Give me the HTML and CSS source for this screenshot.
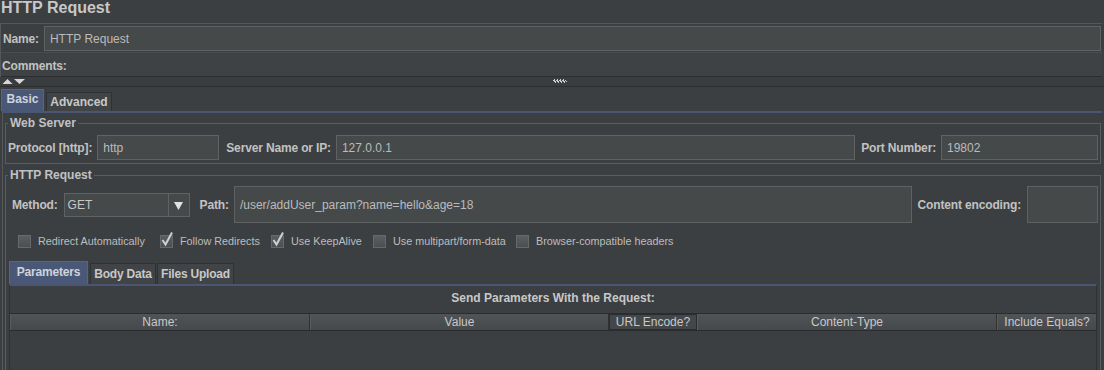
FILE: index.html
```html
<!DOCTYPE html>
<html lang="en">

<head>
    <meta charset="UTF-8">
    <meta name="viewport" content="width=device-width, initial-scale=1.0">
    <title>HTTP Request</title>
    <link rel="stylesheet" href="styles.css">
</head>

<body>
    <div class="title">HTTP Request</div>

    <div class="name-panel">
        <div class="row name-row">
            <span class="label">Name:</span>
            <div class="field grow">HTTP Request</div>
        </div>
        <div class="row comments-row">
            <span class="label">Comments:</span>
        </div>
    </div>

    <div class="splitter">
        <svg class="arrows" width="24" height="7" viewBox="0 0 24 7">
            <polygon points="0.5,6 5.5,1 10.5,6" />
            <polygon points="12,1 23,1 17.5,6" />
        </svg>
        <svg class="grip" width="14" height="5" viewBox="0 0 14 5">
            <rect x="1" y="0" width="1" height="1" /><rect x="4" y="0" width="1" height="1" /><rect x="7" y="0" width="1" height="1" /><rect x="10" y="0" width="1" height="1" />
            <rect x="0" y="1" width="2" height="1" /><rect x="3" y="1" width="2" height="1" /><rect x="6" y="1" width="2" height="1" /><rect x="9" y="1" width="2" height="1" /><rect x="12" y="1" width="1" height="1" />
            <rect x="1" y="2" width="2" height="1" /><rect x="4" y="2" width="2" height="1" /><rect x="7" y="2" width="2" height="1" /><rect x="10" y="2" width="2" height="1" /><rect x="13" y="2" width="1" height="1" />
            <rect x="2" y="3" width="1" height="1" /><rect x="5" y="3" width="1" height="1" /><rect x="8" y="3" width="1" height="1" /><rect x="11" y="3" width="1" height="1" />
        </svg>
    </div>

    <div class="tab-row">
        <div class="tab active tab-basic">Basic</div>
        <div class="tab tab-advanced">Advanced</div>
    </div>

    <div class="tab-body">
        <fieldset class="group web-server">
            <legend>Web Server</legend>
            <div class="row">
                <span class="label">Protocol [http]:</span>
                <div class="field protocol">http</div>
                <span class="label server-label">Server Name or IP:</span>
                <div class="field grow">127.0.0.1</div>
                <span class="label">Port Number:</span>
                <div class="field port">19802</div>
            </div>
        </fieldset>

        <fieldset class="group http-request">
            <legend>HTTP Request</legend>
            <div class="row method-row">
                <span class="label">Method:</span>
                <div class="combo">
                    <span class="combo-text">GET</span>
                    <span class="combo-button">
                        <svg width="9" height="8" viewBox="0 0 9 8"><polygon points="0,0 9,0 4.5,8" /></svg>
                    </span>
                </div>
                <span class="label path-label">Path:</span>
                <div class="field tall grow">/user/addUser_param?name=hello&amp;age=18</div>
                <span class="label">Content encoding:</span>
                <div class="field tall encoding"></div>
            </div>

            <div class="row check-row">
                <span class="cb"></span><span class="cb-label w-redirect">Redirect Automatically</span>
                <span class="cb checked"><svg width="14" height="16" viewBox="0 0 14 16"><path d="M2.5 9 L5.5 13.5 L12 1.5" /></svg></span><span class="cb-label w-follow">Follow Redirects</span>
                <span class="cb checked"><svg width="14" height="16" viewBox="0 0 14 16"><path d="M2.5 9 L5.5 13.5 L12 1.5" /></svg></span><span class="cb-label w-keep">Use KeepAlive</span>
                <span class="cb"></span><span class="cb-label w-multi">Use multipart/form-data</span>
                <span class="cb"></span><span class="cb-label">Browser-compatible headers</span>
            </div>

            <div class="param-tabs">
                <div class="ptab active">Parameters</div>
                <div class="ptab body-data">Body Data</div>
                <div class="ptab files">Files Upload</div>
            </div>
            <div class="param-body">
                <div class="param-title">Send Parameters With the Request:</div>
                <div class="table">
                    <div class="thead">
                        <div class="th">Name:</div>
                        <div class="th">Value</div>
                        <div class="th url">URL Encode?</div>
                        <div class="th">Content-Type</div>
                        <div class="th">Include Equals?</div>
                    </div>
                    <div class="tbody"></div>
                </div>
            </div>
        </fieldset>
    </div>
</body>

</html>
```

FILE: styles.css
```css
* {
    box-sizing: border-box;
}

body {
    margin: 0;
    width: 1104px;
    height: 370px;
    overflow: hidden;
    background-color: #3c3f41;
    color: #bbbbbb;
    font-family: "Liberation Sans", Arial, sans-serif;
    font-size: 12px;
}

.title {
    height: 23px;
    padding-left: 1px;
    font-size: 16px;
    font-weight: bold;
    line-height: 15px;
    color: #c8c8c8;
}

.row {
    display: flex;
    align-items: center;
}

.grow {
    flex-grow: 1;
}

.label {
    font-weight: bold;
    white-space: nowrap;
    color: #c2c2c2;
    margin-right: 6px;
    letter-spacing: -0.15px;
}

.field {
    height: 25px;
    display: flex;
    align-items: center;
    padding-left: 5px;
    background-color: #45494a;
    border: 1px solid #5f6263;
    color: #bbbbbb;
    white-space: nowrap;
}

.field.tall {
    height: 37px;
}

/* name / comments */
.name-panel {
    margin-right: 2px;
    border-top: 1px solid #55585a;
    border-left: 1px solid #55585a;
}

.name-row {
    padding: 2px 1px 1px 2px;
}

.name-row .label {
    margin-right: 5px;
}

.comments-row {
    height: 25px;
    padding: 3px 0 0 1px;
    background-color: #3f4244;
    border-top: 1px solid #4a4d4f;
    border-bottom: 1px solid #2b2d2e;
}

.splitter {
    height: 10px;
    display: flex;
    align-items: center;
    background-color: #3a3d3f;
    border-bottom: 1px solid #2b2d2e;
}

.arrows {
    margin-left: 2px;
    fill: #d6d6d6;
}

.grip {
    margin-left: 527px;
    fill: #cfcfcf;
}

/* top tabs */
.tab-row {
    height: 24px;
    display: flex;
    align-items: flex-end;
    padding-left: 1px;
}

.tab {
    font-weight: bold;
    color: #c8c8c8;
    display: flex;
    align-items: center;
    justify-content: center;
}

.tab-basic {
    width: 43px;
    height: 22px;
    background-color: #4a5878;
    border: 1px solid #56648a;
    border-bottom: none;
    color: #cfd3dc;
    padding-bottom: 3px;
}

.tab-advanced {
    width: 66px;
    height: 19px;
    margin-left: 2px;
    background-color: #414446;
    border: 1px solid #2f3133;
    border-bottom: none;
}

.tab-body {
    margin: 0 2px 0 2px;
    border-top: 2px solid #4b5675;
    border-left: 1px solid #55585a;
    height: 300px;
}

/* titled groups */
.group {
    margin: 0 1px 0 2px;
    padding: 0 2px 0 1px;
    border: 1px solid #5a5d5f;
    min-width: 0;
}

.group legend {
    margin-left: 1px;
    padding: 0 2px;
    font-weight: bold;
    line-height: 14px;
    color: #c2c2c2;
}

.web-server {
    margin-top: 3px;
    padding-top: 5px;
    padding-bottom: 3px;
}

.web-server .label {
    margin-right: 5px;
}

.web-server .row {
    padding-left: 1px;
}

.protocol {
    width: 122px;
    margin-right: 7px;
}

.server-label {
    margin-right: 6px;
}

.web-server .grow {
    margin-right: 6px;
}

.port {
    width: 157px;
}

.http-request {
    margin-top: 4px;
    padding-top: 4px;
    height: 220px;
}

.method-row {
    padding-left: 5px;
}

.combo {
    width: 126px;
    height: 24px;
    display: flex;
    margin-right: 10px;
    background-color: #45494a;
    border: 1px solid #5f6263;
}

.combo-text {
    flex-grow: 1;
    padding-left: 3px;
    display: flex;
    align-items: center;
    color: #c8c8c8;
}

.combo-button {
    width: 21px;
    display: flex;
    align-items: center;
    justify-content: center;
    border-left: 1px solid #5f6263;
    fill: #e2e2e2;
    padding-top: 3px;
}

.path-label {
    margin-right: 5px;
}

.method-row .grow {
    margin-right: 6px;
}

.encoding {
    width: 71px;
}

/* checkboxes */
.check-row {
    height: 36px;
    padding-left: 11px;
    font-size: 10.8px;
}

.cb {
    width: 13px;
    height: 13px;
    position: relative;
    margin-right: 7px;
    background: linear-gradient(#5a5e60, #4b4f51);
    border: 1px solid #66696b;
}

.cb svg {
    position: absolute;
    left: -1px;
    top: -5px;
    fill: none;
    stroke: #cfcfcf;
    stroke-width: 2;
}

.cb-label {
    color: #bdbdbd;
    white-space: nowrap;
}

.w-redirect {
    width: 122px;
}

.w-follow {
    width: 91px;
}

.w-keep {
    width: 82px;
}

.w-multi {
    width: 123px;
}

/* parameter tabs */
.param-tabs {
    height: 25px;
    display: flex;
    align-items: flex-end;
    margin-left: 2px;
}

.ptab {
    height: 21px;
    margin-right: 1px;
    font-weight: bold;
    letter-spacing: -0.2px;
    color: #c8c8c8;
    display: flex;
    align-items: center;
    justify-content: center;
    background-color: #414446;
    border: 1px solid #2f3133;
    border-bottom: none;
}

.ptab.active {
    height: 23px;
    width: 79px;
    margin-right: 2px;
    padding-bottom: 3px;
    background-color: #4a5878;
    border-color: #56648a;
    color: #cfd3dc;
}

.ptab.body-data {
    width: 66px;
}

.ptab.files {
    width: 77px;
}

.param-body {
    margin: 0 1px 0 2px;
    border-top: 2px solid #4b5675;
    border-left: 1px solid #2e3031;
    border-right: 1px solid #2e3031;
    height: 120px;
}

.param-title {
    padding-top: 5px;
    text-align: center;
    font-weight: bold;
    line-height: 14px;
    color: #c8c8c8;
}

.table {
    margin-top: 8px;
}

.thead {
    display: grid;
    grid-template-columns: 300px 299px 88px 300px 1fr;
    height: 18px;
    background: linear-gradient(#515456, #46494b);
    border-top: 1px solid #2a2c2d;
    border-bottom: 1px solid #2a2c2d;
}

.th {
    display: flex;
    align-items: center;
    justify-content: center;
    color: #c8c8c8;
    border-right: 1px solid #2f3133;
    border-left: 1px solid #5a5d5f;
    white-space: nowrap;
}

.th.url {
    background-color: #444749;
    border: 1px solid #2a2c2d;
}

.th:last-child {
    border-right: none;
}

.tbody {
    height: 60px;
}
```
